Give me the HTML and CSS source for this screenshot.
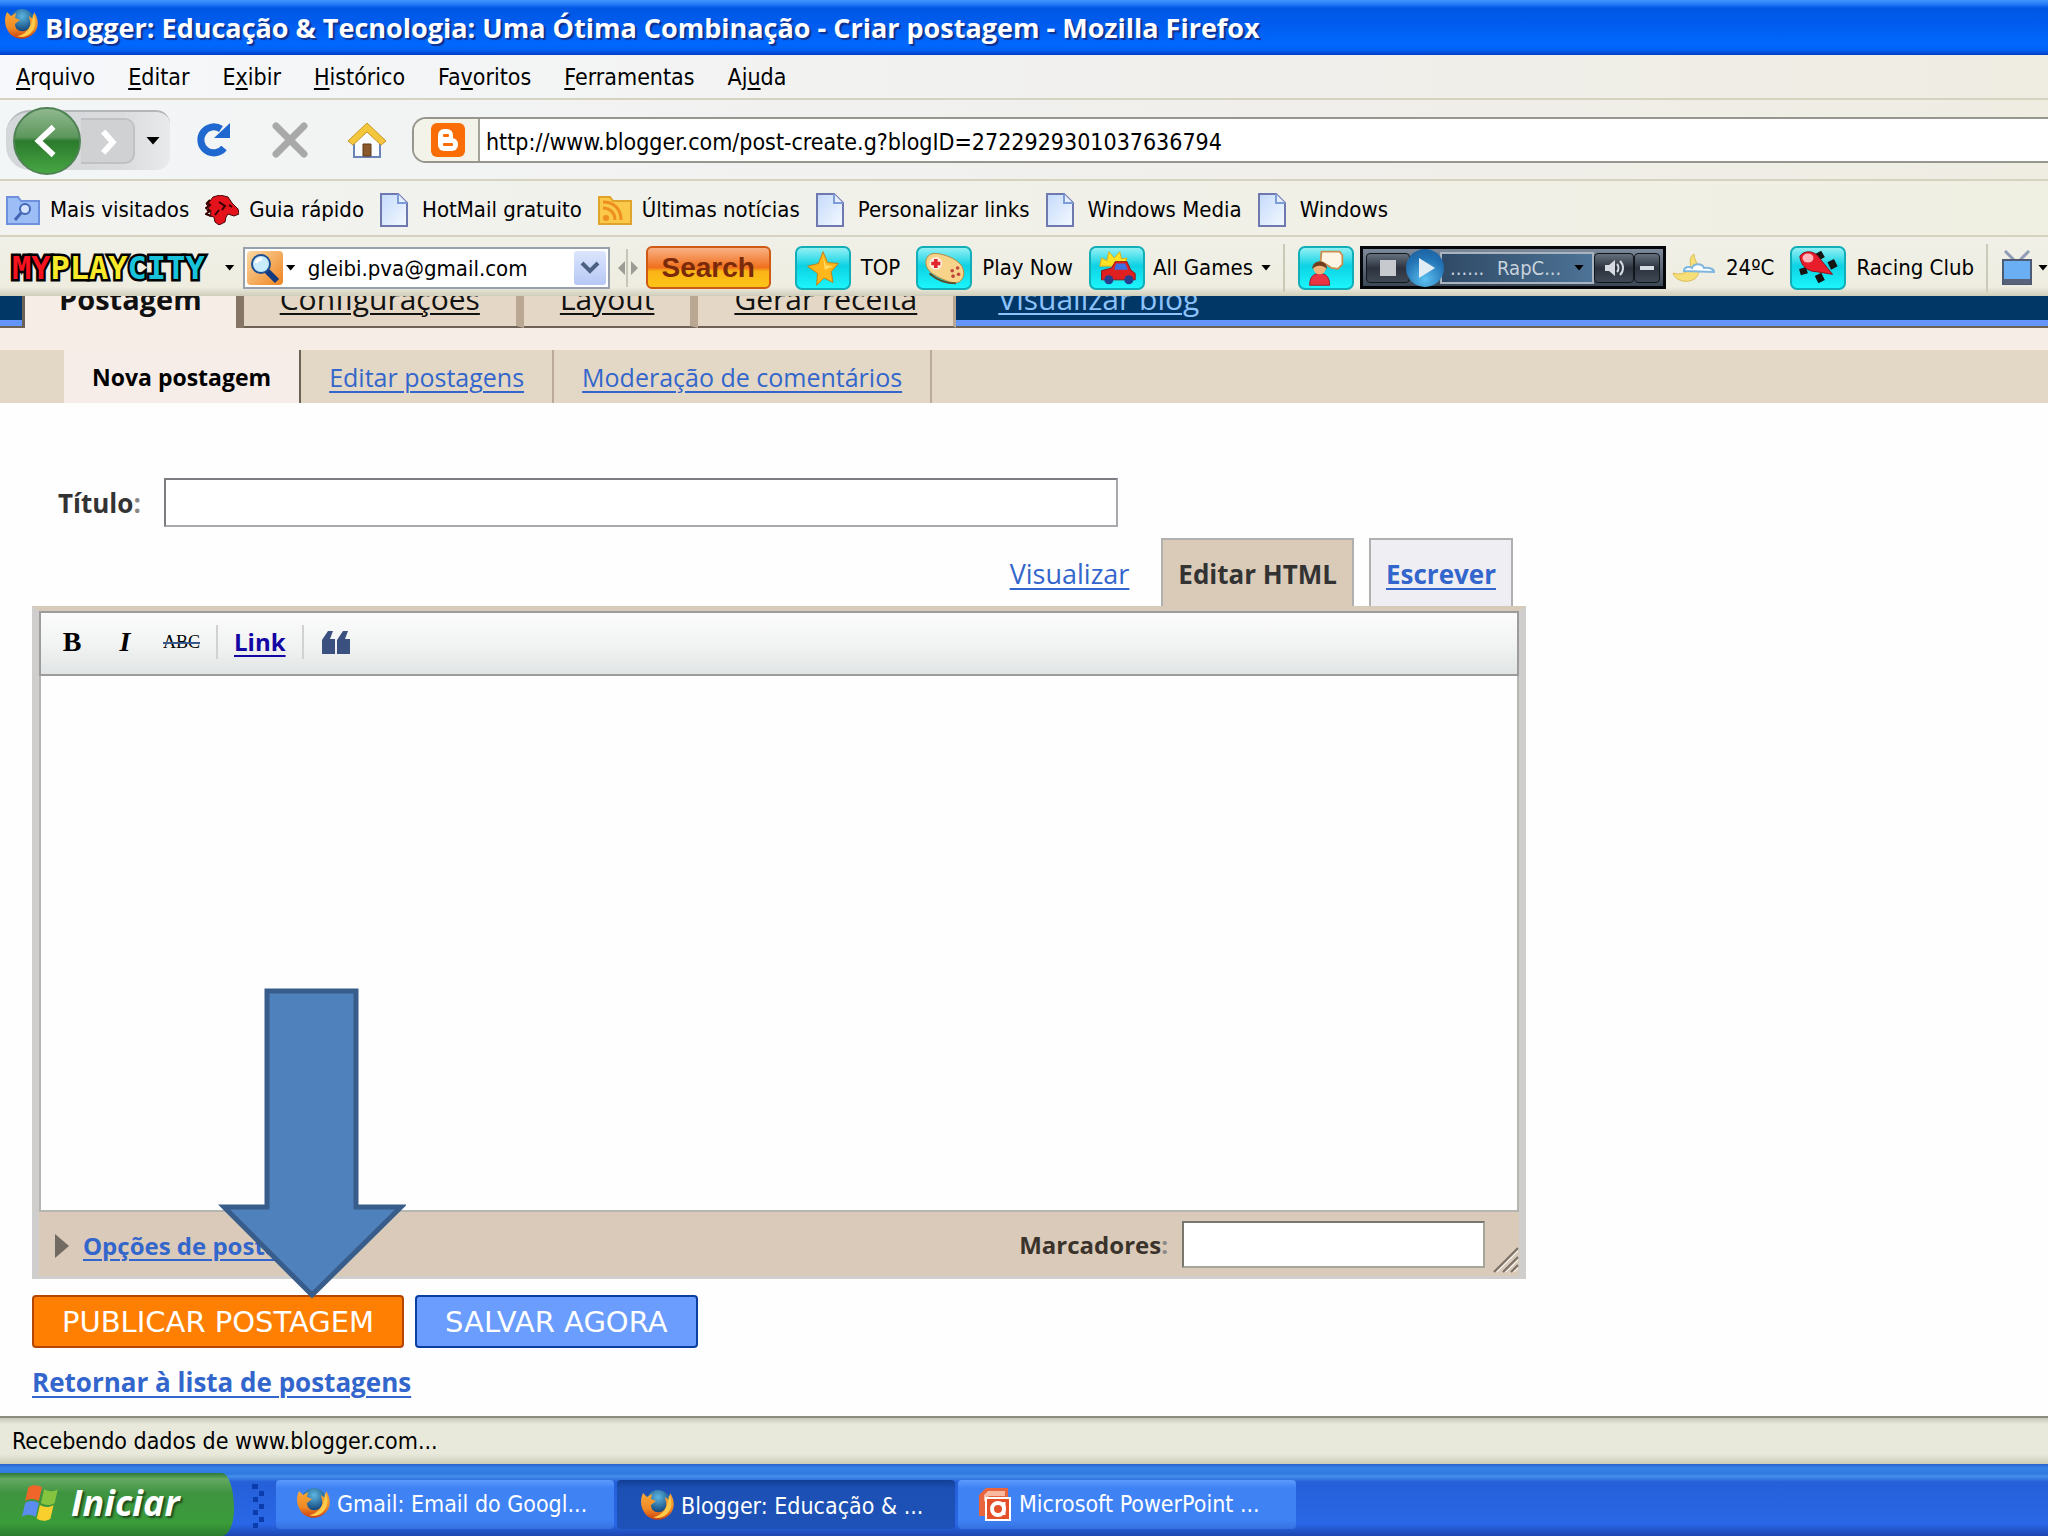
FILE: index.html
```
<!DOCTYPE html>
<html lang="pt-BR">
<head>
    <meta charset="UTF-8">
    <meta name="viewport" content="width=device-width, initial-scale=1.0">
    <title>Blogger: Educação &amp; Tecnologia: Uma Ótima Combinação - Criar postagem</title>
    <link rel="stylesheet" href="styles.css">
</head>
<body>
    <!-- Shared icons -->
    <svg class="defs" aria-hidden="true">
        <defs>
            <linearGradient id="pageFill" x1="0" y1="0" x2="1" y2="1">
                <stop offset="0" stop-color="#c4dafb"/>
                <stop offset="1" stop-color="#f4f9ff"/>
            </linearGradient>
            <radialGradient id="globe" cx="0.5" cy="0.3" r="0.7">
                <stop offset="0" stop-color="#5cb6e0"/>
                <stop offset="1" stop-color="#0b3a70"/>
            </radialGradient>
            <linearGradient id="fox" x1="0" y1="0" x2="0" y2="1">
                <stop offset="0" stop-color="#f9a83a"/>
                <stop offset="0.6" stop-color="#f08a24"/>
                <stop offset="1" stop-color="#c93c10"/>
            </linearGradient>
        </defs>
        <symbol id="firefox" viewBox="0 0 34 34">
            <circle cx="18" cy="13" r="12" fill="url(#globe)"/>
            <path d="M3 4l4 4 5-3-1 5 5 2-5 4c0 5 4 8 9 7 5-1 7-5 6-10l-1-5 4 3 1-7c5 7 5 16 0 21-6 7-17 8-24 1C0 18 0 11 3 4z" fill="url(#fox)"/>
            <path d="M29 6c4 7 3 14-2 19-4 4-10 5-14 3 8-1 15-7 16-22z" fill="#ffc94a"/>
        </symbol>
        <symbol id="page" viewBox="0 0 28 34">
            <path d="M1 1h17l9 9v23H1z" fill="url(#pageFill)" stroke="#7078b0" stroke-width="2"/>
            <path d="M18 1v9h9" fill="#e4eefc" stroke="#7c9cd8" stroke-width="2"/>
        </symbol>
    </svg>

    <header class="titlebar">
        <svg class="title-icon"><use href="#firefox"/></svg>
        <h1>Blogger: Educação &amp; Tecnologia: Uma Ótima Combinação - Criar postagem - Mozilla Firefox</h1>
    </header>

    <nav class="menubar">
        <button><u>A</u>rquivo</button>
        <button><u>E</u>ditar</button>
        <button>E<u>x</u>ibir</button>
        <button><u>H</u>istórico</button>
        <button>Fa<u>v</u>oritos</button>
        <button><u>F</u>erramentas</button>
        <button>Aj<u>u</u>da</button>
    </nav>

    <div class="navbar">
        <div class="history">
            <button class="back" aria-label="Voltar">
                <svg viewBox="0 0 68 68"><path d="M41 19L25 34l16 15" fill="none" stroke="#fff" stroke-width="6"/></svg>
            </button>
            <button class="forward" aria-label="Avançar">
                <svg viewBox="0 0 54 46"><path d="M23 12l10 11-10 11" fill="none" stroke="#fff" stroke-width="6"/></svg>
            </button>
            <button class="caret" aria-label="Histórico recente"></button>
        </div>
        <button class="nav-icon" aria-label="Recarregar">
            <svg viewBox="0 0 36 36"><path d="M29 26A13 13 0 1 1 26 7" fill="none" stroke="#1e68cf" stroke-width="7"/><path d="M35 1v15H19z" fill="#1e68cf"/></svg>
        </button>
        <button class="nav-icon" aria-label="Parar">
            <svg viewBox="0 0 36 36"><path d="M4 4l28 28M32 4L4 32" stroke="#a9a9a9" stroke-width="7" stroke-linecap="round"/></svg>
        </button>
        <button class="nav-icon" aria-label="Página inicial">
            <svg viewBox="0 0 38 36"><path d="M6 18L19 6l13 12v17H6z" fill="#fafcff" stroke="#6a83b8" stroke-width="2"/><path d="M15 22h8v12h-8z" fill="#8a5a2c" stroke="#5c3a1c"/><path d="M19 1L0 19l5 4L19 10l14 13 5-4z" fill="#f3c63b" stroke="#c9962a"/></svg>
        </button>
        <div class="address">
            <span class="site">
                <svg viewBox="0 0 34 34"><rect width="34" height="34" rx="6" fill="#f96c06"/><rect x="7" y="6" width="15" height="21" rx="6" fill="#fff"/><rect x="7" y="15" width="20" height="13" rx="6" fill="#fff"/><rect x="12" y="11" width="6" height="3" rx="1" fill="#f96c06"/><rect x="12" y="20" width="10" height="3" rx="1" fill="#f96c06"/></svg>
            </span>
            <input type="text" aria-label="Endereço" value="http://www.blogger.com/post-create.g?blogID=2722929301037636794">
        </div>
    </div>

    <nav class="bookmarks">
        <a href="#"><svg class="mark" viewBox="0 0 34 30"><path d="M1 2h11l3 4h18v23H1z" fill="#9dbdf6" stroke="#6f90dc" stroke-width="2"/><circle cx="19" cy="14" r="5" fill="#d2e2ff" stroke="#4464b4" stroke-width="2"/><path d="M15 18l-6 7" stroke="#4464b4" stroke-width="3"/></svg>Mais visitados</a>
        <a href="#"><svg class="mark" viewBox="0 0 34 30"><path d="M5 6l3-4 7-2 8 2 4 6 6 6 1 5-5 2-6-2-2 3-1 5-6 3-4-3-1-5-4-1 1-4-4-1 2-4-3-3 3-2z" fill="#e3121b" stroke="#4a0508"/><path d="M5 5L2 8l3 2-4 3 4 3-4 3 5 2M14 7l6 4-3 4M24 10l3 2M10 20l4-5" stroke="#300" stroke-width="2" fill="none"/></svg>Guia rápido</a>
        <a href="#"><svg class="sheet"><use href="#page"/></svg>HotMail gratuito</a>
        <a href="#"><svg class="mark" viewBox="0 0 34 30"><path d="M1 2h11l3 4h18v23H1z" fill="#fbc94a" stroke="#e0a32c" stroke-width="2"/><path d="M5 13c7 0 12 5 12 12M5 7c11 0 18 7 18 18" fill="none" stroke="#ef8e21" stroke-width="3"/><circle cx="8" cy="23" r="3" fill="#ef8e21"/></svg>Últimas notícias</a>
        <a href="#"><svg class="sheet"><use href="#page"/></svg>Personalizar links</a>
        <a href="#"><svg class="sheet"><use href="#page"/></svg>Windows Media</a>
        <a href="#"><svg class="sheet"><use href="#page"/></svg>Windows</a>
    </nav>

    <div class="toolbar">
        <a href="#" class="logo"><span class="red">My</span><span class="yellow">Play</span><span class="cyan">City</span></a>
        <button class="caret" aria-label="Menu MyPlayCity"></button>
        <div class="search">
            <button class="lens" aria-label="Tipo de busca">
                <svg viewBox="0 0 36 34"><path d="M19 19l11 11" stroke="#123a80" stroke-width="6"/><circle cx="14" cy="13" r="9" fill="#c8ecfa" stroke="#1c4f94" stroke-width="2"/><path d="M9 12c1-3 3-4 6-4" stroke="#fff" stroke-width="3" fill="none"/></svg>
            </button>
            <span class="caret"></span>
            <input type="text" aria-label="Buscar" value="gleibi.pva@gmail.com">
            <button class="drop" aria-label="Abrir lista">
                <svg viewBox="0 0 20 14"><path d="M2 2l8 8 8-8" fill="none" stroke="#4d6185" stroke-width="4"/></svg>
            </button>
        </div>
        <svg class="splitter" viewBox="0 0 20 40"><path d="M9 1v38" stroke="#c8c6b8" stroke-width="2"/><path d="M7 13v14l-7-7zM13 13v14l7-7z" fill="#9c9c94"/></svg>
        <button class="search-btn">Search</button>
        <a href="#" class="tool">
            <svg class="tile" viewBox="0 0 56 44"><path d="M28 4l5 12 12 1-8 9 2 12-10-5-8 8 1-13-11-8 12-3z" fill="#fdb61b" stroke="#c07c10"/><path d="M28 9l3 10 8 1-9 4z" fill="#ffdf6a"/></svg>TOP
        </a>
        <a href="#" class="tool">
            <svg class="tile" viewBox="0 0 56 44"><path d="M8 16c0-6 4-10 10-10 8 0 23 5 29 13 4 6 4 14-2 18-5 3-12 0-19-3C17 30 8 25 8 16z" fill="#f8d48a" stroke="#b98235"/><path d="M12 28c7 6 18 11 29 11" fill="none" stroke="#5a4a28" stroke-width="2"/><circle cx="19" cy="17" r="7" fill="#fbeedd"/><path d="M19 12v10M14 17h10" stroke="#e2262d" stroke-width="4"/><circle cx="37" cy="25" r="2" fill="#c2473c"/><circle cx="43" cy="22" r="2" fill="#c2473c"/><circle cx="38" cy="31" r="2" fill="#c2473c"/><circle cx="44" cy="29" r="2" fill="#c2473c"/></svg>Play Now
        </a>
        <a href="#" class="tool games">
            <svg class="tile" viewBox="0 0 56 44"><path d="M9 20l2-9 6 3 2-10 6 7 6-7 2 8 6-1-3 9z" fill="#ffe324" stroke="#e0a81a"/><path d="M11 25l11-3 4-7h13l4 9 5 4v7H11z" fill="#e02020" stroke="#8d1010"/><path d="M27 17h10l3 7H25z" fill="#3d6fe0"/><circle cx="19" cy="35" r="5" fill="#26408f"/><circle cx="41" cy="35" r="5" fill="#26408f"/></svg>All Games<span class="caret"></span>
        </a>
        <span class="divider"></span>
        <a href="#" class="tile-link" aria-label="Chat">
            <svg class="tile" viewBox="0 0 56 44"><path d="M23 4h20l3 4v10l-5 5-7-1-6-4-6-3z" fill="#fff5e4" stroke="#c98d4e" stroke-width="2"/><path d="M10 41c0-9 4-13 11-13s11 4 11 13z" fill="#ea3443" stroke="#a01522"/><circle cx="21" cy="22" r="7" fill="#efb57c"/><path d="M13 23c-1-11 17-11 16 0-4-4-11-5-16 0z" fill="#72401f"/></svg>
        </a>
        <div class="player">
            <button class="player-btn stop" aria-label="Parar"><i></i></button>
            <button class="play" aria-label="Tocar"><svg viewBox="0 0 38 38"><path d="M13 9l16 10-16 10z" fill="#e2ecf5"/></svg></button>
            <span class="track"><span>......</span><span>RapC...</span><span class="caret"></span></span>
            <button class="player-btn" aria-label="Volume"><svg viewBox="0 0 20 20"><path d="M1 7h4l6-5v16l-6-5H1z" fill="#d6dbe2"/><path d="M13 6c2 2 2 6 0 8M16 3c4 4 4 10 0 14" stroke="#d6dbe2" stroke-width="2" fill="none"/></svg></button>
            <button class="player-btn" aria-label="Minimizar"><svg viewBox="0 0 20 20"><path d="M3 10h14" stroke="#d6dbe2" stroke-width="4"/></svg></button>
        </div>
        <a href="#" class="tool weather">
            <svg viewBox="0 0 44 30"><path d="M22 1c-5 3-4 9-3 13-4 7-12 8-18 6 2 7 10 9 16 8 8-1 11-8 10-14-2-5-5-7-5-13z" fill="#f6df78" stroke="#dcbc55"/><path d="M12 18c0-4 5-5 8-3 2-5 10-5 12 0 5-1 10 1 10 4z" fill="#fff" stroke="#7db7e0" stroke-width="2"/></svg>24ºC
        </a>
        <a href="#" class="tool">
            <svg class="tile" viewBox="0 0 56 44"><path d="M28 5l4 7M11 22l2 7M42 14l4 8M28 29l4 8" stroke="#151515" stroke-width="8"/><path d="M8 9c5-7 15-6 20 0l16 20-18-3C17 26 9 20 8 9z" fill="#e81d2c" stroke="#8b0b15"/><ellipse cx="17" cy="11" rx="6" ry="5" fill="#ffb7bd"/></svg>Racing Club
        </a>
        <span class="divider"></span>
        <button class="tv" aria-label="TV">
            <svg viewBox="0 0 30 36"><path d="M3 1l9 9M27 1l-9 9" stroke="#8f9db5" stroke-width="3"/><rect x="1" y="10" width="28" height="24" fill="#6aaef4" stroke="#4c5a74" stroke-width="2"/><path d="M2 29h26v5H2z" fill="#59647a"/></svg>
            <span class="caret"></span>
        </button>
    </div>

    <main>
        <nav class="tabs">
            <div class="tab current">Postagem</div>
            <a href="#" class="tab">Configurações</a>
            <a href="#" class="tab">Layout</a>
            <a href="#" class="tab">Gerar receita</a>
            <a href="#" class="view-blog">Visualizar blog</a>
        </nav>

        <nav class="subtabs">
            <span class="subtab current">Nova postagem</span>
            <a href="#" class="subtab">Editar postagens</a>
            <a href="#" class="subtab">Moderação de comentários</a>
        </nav>

        <form class="post">
            <div class="title-row">
                <label for="title">Título<span class="colon">:</span></label>
                <input type="text" id="title">
            </div>

            <div class="modes">
                <a href="#" class="mode plain">Visualizar</a>
                <span class="mode html">Editar HTML</span>
                <a href="#" class="mode compose">Escrever</a>
            </div>

            <div class="editor">
                <div class="format">
                    <button type="button" class="bold">B</button>
                    <button type="button" class="italic">I</button>
                    <button type="button" class="strike">ABC</button>
                    <span class="format-sep"></span>
                    <a href="#" class="link">Link</a>
                    <span class="format-sep"></span>
                    <button type="button" aria-label="Citação">
                        <svg class="quote" viewBox="0 0 28 24"><path d="M0 24V10L6 1h5L8 9h5v15zM15 24V10l6-9h5l-3 8h5v15z" fill="#3a507e"/></svg>
                    </button>
                </div>
                <textarea aria-label="Texto da postagem"></textarea>
                <div class="editor-foot">
                    <a href="#" class="options">Opções de postagem</a>
                    <label for="labels">Marcadores<span class="colon">:</span></label>
                    <input type="text" id="labels">
                    <svg class="grip" viewBox="0 0 26 26"><path d="M1 25L25 1M10 25l15-15M18 25l7-7" stroke="#7a7068" stroke-width="2"/><path d="M4 25L25 4M13 25l12-12M21 25l4-4" stroke="#fff" stroke-width="1"/></svg>
                </div>
                <!-- Points at the publish button -->
                <svg class="pointer" viewBox="0 0 188 312"><path d="M49 3h89v216h45L94 307 6 219h43z" fill="#4f81bd" stroke="#385d8a" stroke-width="5"/></svg>
            </div>

            <div class="actions">
                <button type="button" class="publish">PUBLICAR POSTAGEM</button>
                <button type="button" class="save">SALVAR AGORA</button>
            </div>
            <a href="#" class="return">Retornar à lista de postagens</a>
        </form>
    </main>

    <div class="status">Recebendo dados de www.blogger.com...</div>

    <footer class="taskbar">
        <button class="start">
            <svg viewBox="0 0 38 36"><path d="M6 3c5-3 9-2 13 0l-3 13c-4-2-8-3-13 0z" fill="#f0652a"/><path d="M21 5c4 2 8 3 13 0l-3 13c-5 3-9 2-13 0z" fill="#86c440"/><path d="M3 18c5-3 9-2 13 0l-3 13c-4-2-8-3-13 0z" fill="#5b8df0"/><path d="M17 20c4 2 8 3 13 0l-3 13c-5 3-9 2-13 0z" fill="#f8cf2c"/></svg>
            Iniciar
        </button>
        <span class="dots"></span>
        <button class="task"><svg><use href="#firefox"/></svg>Gmail: Email do Googl...</button>
        <button class="task active"><svg><use href="#firefox"/></svg>Blogger: Educação &amp; ...</button>
        <button class="task">
            <svg viewBox="0 0 34 34"><path d="M8 1h22v28H1V8z" fill="#e8643c"/><path d="M10 4h17v5H11l-5 6v-7z" fill="#f7b9a0"/><rect x="8" y="11" width="24" height="22" fill="#e4502a" stroke="#fff" stroke-width="2"/><circle cx="20" cy="22" r="6" fill="none" stroke="#fff" stroke-width="4"/><path d="M26 15v13" stroke="#fff" stroke-width="3"/></svg>Microsoft PowerPoint ...
        </button>
    </footer>
</body>
</html>
```
FILE: styles.css
```
* {
    box-sizing: border-box;
}

body {
    margin: 0;
    min-height: 100vh;
    display: flex;
    flex-direction: column;
    font-family: 'DejaVu Sans Condensed', 'DejaVu Sans', sans-serif;
    font-size: 23px;
    line-height: 28px;
    color: #000;
    background-color: #fefefe;
    overflow-x: hidden;
}

button,
input,
textarea {
    font: inherit;
    color: inherit;
    margin: 0;
    padding: 0;
    border: none;
    background: none;
    border-radius: 0;
    outline: none;
}

svg {
    display: block;
    flex: none;
}

a {
    color: #3366cc;
    text-underline-offset: 4px;
    text-decoration-thickness: 2px;
}

.defs {
    position: absolute;
    width: 0;
    height: 0;
}

.caret {
    flex: none;
    width: 10px;
    height: 6px;
    background-color: #000;
    clip-path: polygon(0 0, 100% 0, 50% 100%);
}

/* Browser window */
.titlebar {
    display: flex;
    align-items: center;
    height: 55px;
    padding: 0 4px;
    background: linear-gradient(#3f97ff 0, #2a7df8 4px, #0058e4 8px, #005cee 24px, #0068ff 44px, #0062f4 50px, #003cc4 55px);
}

.title-icon {
    width: 34px;
    height: 34px;
    margin-bottom: 6px;
}

.titlebar h1 {
    margin: 0 7px;
    font-family: 'Open Sans', sans-serif;
    font-size: 27px;
    line-height: 36px;
    color: #fff;
    text-shadow: 2px 2px 1px #10308c;
    white-space: nowrap;
}

.menubar {
    display: flex;
    gap: 33px;
    align-items: center;
    height: 45px;
    padding: 0 16px;
    background: linear-gradient(90deg, #f6f8fb, #f0efec 60%, #efede2);
    border-bottom: 2px solid #d6d2c0;
}

.menubar u {
    text-underline-offset: 3px;
    text-decoration-thickness: 2px;
}

.navbar {
    display: flex;
    align-items: center;
    height: 81px;
    padding-left: 6px;
    background: linear-gradient(90deg, #f3f6f7, #f0efec 60%, #efede2);
    border-bottom: 2px solid #d6d2c0;
}

.history {
    display: flex;
    align-items: center;
    width: 164px;
    height: 60px;
    margin-right: 24px;
    padding-left: 7px;
    border-radius: 24px 14px 14px 24px;
    border-top: 2px solid #b4b6b8;
    background: linear-gradient(90deg, #d4d7da, #d9dbdd 70%, #e9eaeb);
}

.back {
    width: 68px;
    height: 68px;
    margin: -6px 0;
    border-radius: 50%;
    border: 2px solid #4f8254;
    background: linear-gradient(#90b890 0, #5d975c 44%, #2b7a2c 50%, #46a643 100%);
}

.forward {
    width: 54px;
    height: 46px;
    border: 2px solid #bfc1c3;
    border-left: none;
    border-radius: 0 10px 10px 0;
    background-color: #cfd1d3;
}

.forward svg {
    width: 100%;
}

.history .caret {
    width: 14px;
    height: 8px;
    margin-left: 11px;
}

.nav-icon {
    width: 38px;
    margin-right: 39px;
}

.nav-icon svg {
    width: 38px;
    height: 36px;
}

.address {
    flex: 1;
    display: flex;
    align-items: center;
    height: 46px;
    margin-left: -13px;
    border: 2px solid #96968e;
    border-right: none;
    border-radius: 14px 0 0 14px;
    background-color: #fff;
    overflow: hidden;
}

.site {
    display: flex;
    align-items: center;
    justify-content: center;
    width: 66px;
    height: 100%;
    padding-left: 4px;
    background-color: #f4f3ea;
    border-right: 2px solid #a4a49a;
}

.site svg {
    width: 34px;
    height: 34px;
}

.address input {
    flex: 1;
    padding: 4px 0 0 6px;
}

.bookmarks {
    display: flex;
    align-items: center;
    gap: 16px;
    height: 56px;
    padding: 4px 0 0 6px;
    font-size: 22px;
    background: linear-gradient(90deg, #f2f2f0, #efefe2);
    border-bottom: 2px solid #d6d2c0;
}

.bookmarks a,
.tool {
    display: flex;
    align-items: center;
    color: #000;
    text-decoration: none;
    white-space: nowrap;
}

.mark {
    width: 34px;
    height: 30px;
    margin-right: 10px;
}

.sheet {
    width: 28px;
    height: 34px;
    margin-right: 14px;
}

.toolbar {
    display: flex;
    align-items: center;
    height: 59px;
    padding: 2px 0 0 12px;
    font-size: 22px;
    background: linear-gradient(#f1f0e8, #eeede0 50px, #cfcdba);
    overflow: hidden;
}

.logo {
    width: 194px;
    font-family: 'DejaVu Sans Mono', monospace;
    font-size: 32px;
    font-weight: bold;
    line-height: 40px;
    text-decoration: none;
    text-transform: uppercase;
    -webkit-text-stroke: 5px #000;
    paint-order: stroke fill;
}

.red {
    color: #f5131f;
}

.yellow {
    color: #f8ea2a;
}

.cyan {
    color: #19c3dc;
}

.logo + .caret {
    margin: 0 8px 0 20px;
}

.search {
    display: flex;
    align-items: center;
    width: 370px;
    height: 42px;
    padding: 2px;
    background-color: #fff;
    border: 2px solid #98a0ac;
}

.lens {
    width: 36px;
    height: 34px;
    margin-right: 3px;
    border-radius: 4px;
    background: linear-gradient(135deg, #fcd9a4, #ee8420);
}

.search input {
    flex: 1;
    min-width: 0;
    padding: 3px 0 0 12px;
}

.drop {
    width: 32px;
    height: 34px;
    border-radius: 3px;
    background: linear-gradient(#dbe5fd, #b6c8f4);
}

.drop svg {
    width: 20px;
    height: 14px;
    margin: 0 auto;
}

.splitter {
    width: 20px;
    height: 40px;
    margin: 0 8px;
}

.search-btn {
    width: 126px;
    height: 43px;
    margin-right: 24px;
    font-family: 'Liberation Sans', sans-serif;
    font-size: 28px;
    font-weight: bold;
    color: #7a2a0a;
    border: 2px solid #cf5a14;
    border-radius: 6px;
    background: linear-gradient(#f9b184, #f0701e 50%, #fbb416 60%, #fdc417);
}

.tool {
    gap: 10px;
    margin-right: 16px;
}

.games {
    gap: 8px;
}

.tile {
    width: 56px;
    height: 44px;
    border: 2px solid #12aeb8;
    border-radius: 7px;
    background: linear-gradient(#93f0f4, #0cd2e4 45%, #1cf5fb);
}

.divider {
    flex: none;
    width: 2px;
    height: 48px;
    margin-left: -4px;
    background-color: #cbc9b8;
}

.tile-link {
    margin: 0 6px 0 13px;
}

.player {
    display: flex;
    align-items: center;
    flex: none;
    width: 306px;
    height: 43px;
    margin-right: 6px;
    padding: 3px;
    border: 3px solid #05070a;
    background: linear-gradient(#7e8a99, #3c4856);
    color: #c8d2dc;
}

.player-btn {
    width: 40px;
    height: 30px;
    border: 1px solid #11161d;
    border-radius: 4px;
    background: linear-gradient(#66707e, #2c333e 50%, #3f4855);
}

.player-btn svg {
    width: 20px;
    height: 20px;
    margin: 0 auto;
}

.player-btn:last-child {
    width: 26px;
}

.stop {
    width: 44px;
}

.stop i {
    display: block;
    width: 16px;
    height: 16px;
    margin: 0 auto;
    background-color: #c6c9ce;
}

.play {
    width: 38px;
    height: 38px;
    margin: 0 -4px;
    border-radius: 50%;
    z-index: 1;
    background: radial-gradient(circle at 50% 80%, #5cc0f0, #2272b4 60%, #1b5c98);
}

.track {
    flex: 1;
    display: flex;
    align-items: center;
    justify-content: space-between;
    height: 32px;
    padding: 0 8px;
    font-size: 20px;
    border: 2px solid #a8b4c0;
    background: linear-gradient(90deg, #2f4a66, #4d7396);
}

.weather svg {
    width: 44px;
    height: 30px;
}

.tv {
    display: flex;
    align-items: center;
    gap: 6px;
    margin-left: 14px;
}

.tv svg {
    width: 30px;
    height: 36px;
}

/* Blogger page */
main {
    flex: 1;
    font-family: 'Open Sans', sans-serif;
    font-size: 25px;
    line-height: 32px;
}

.tabs {
    display: flex;
    align-items: flex-end;
    height: 32px;
    padding-left: 22px;
    overflow: hidden;
    background: linear-gradient(#003767 24px, #6496fa 24px, #6496fa 30px, #6d6054 30px);
}

.tab,
.view-blog {
    flex: none;
    height: 60px;
    padding: 15px 36px 0;
    font-size: 30px;
    text-underline-offset: 3px;
}

.tab {
    border-right: 8px solid #b9a793;
    border-bottom: 2px solid #6d6054;
    background-color: #e4d7c5;
    color: #111;
}

.tab.current {
    padding: 15px 34px 0;
    font-size: 29px;
    font-weight: bold;
    border-left: 3px solid #6d6054;
    border-right-color: #857565;
    border-bottom: none;
    background-color: #f6ede7;
}

.tab:nth-child(4) {
    border-right-width: 3px;
}

.view-blog {
    padding-left: 42px;
    color: #8ec2fb;
}

.subtabs {
    display: flex;
    height: 75px;
    padding: 0 64px;
    border-top: 22px solid #f6ede6;
    background-color: #e3d8c5;
}

.subtab {
    padding: 11px 28px;
    border-right: 2px solid #b9ab98;
}

.subtab.current {
    font-size: 23px;
    font-weight: bold;
    border-right-color: #6d6054;
    background-color: #f6ede8;
}

.post {
    width: 1526px;
    max-width: 100%;
    padding: 75px 0 0 32px;
}

.title-row {
    display: flex;
    align-items: center;
    padding-left: 26px;
}

.title-row label {
    width: 106px;
    font-size: 26px;
    font-weight: bold;
    color: #333;
}

.colon {
    color: #888;
}

.title-row input {
    width: 954px;
    height: 49px;
    border: 2px solid #a9a9ad;
    border-top-color: #7c7c82;
    border-left-color: #7c7c82;
    background-color: #fff;
}

.modes {
    display: flex;
    justify-content: flex-end;
    gap: 15px;
    padding: 11px 13px 0 0;
}

.mode {
    height: 68px;
    padding: 18px 15px 0;
    font-size: 26px;
    font-weight: bold;
    border: 2px solid #b0b0b0;
    border-bottom: none;
}

.plain {
    font-size: 27px;
    font-weight: normal;
    border-color: transparent;
}

.html {
    color: #333;
    background-color: #dacbb9;
}

.compose {
    background-color: #efeef2;
}

.editor {
    position: relative;
    border: 7px solid #cfcecd;
    border-top: 5px solid #d8cab8;
    border-bottom-width: 3px;
}

.format {
    display: flex;
    align-items: center;
    height: 65px;
    padding: 0 0 3px 20px;
    border: 2px solid #9c9c9c;
    background: linear-gradient(#fbfcfb, #f2f4f3 50%, #e2e5e5);
    font-family: 'Liberation Serif', serif;
}

.bold,
.italic {
    width: 22px;
    margin-right: 31px;
    font-size: 28px;
    font-weight: bold;
}

.italic {
    font-style: italic;
    margin-right: 27px;
}

.strike {
    font-size: 18px;
    text-decoration: line-through #3a5a8c 2px;
}

.format-sep {
    width: 2px;
    height: 34px;
    margin: 0 16px;
    background-color: #d2d2d2;
}

.link {
    font-family: 'Open Sans', sans-serif;
    font-size: 24px;
    font-weight: bold;
    color: #1406a4;
}

.quote {
    width: 28px;
    height: 24px;
    margin-left: 2px;
}

textarea {
    display: block;
    width: 100%;
    height: 536px;
    resize: none;
    border: 2px solid #b5b5b2;
    border-top: none;
    background-color: #fefefe;
}

.editor-foot {
    display: flex;
    align-items: center;
    height: 64px;
    padding-left: 16px;
    background-color: #dacab9;
    font-size: 24px;
    font-weight: bold;
}

.options {
    display: flex;
    align-items: center;
    gap: 14px;
    margin-right: auto;
    padding-top: 4px;
}

.options::before {
    content: '';
    width: 14px;
    height: 24px;
    background-color: #716a62;
    clip-path: polygon(0 0, 100% 50%, 0 100%);
}

.editor-foot label {
    margin-right: 14px;
    padding-top: 2px;
    color: #3a332c;
}

.editor-foot input {
    width: 303px;
    height: 47px;
    border: 2px solid #a5a59a;
    border-top-color: #77776e;
    border-left-color: #77776e;
    background-color: #fff;
}

.grip {
    width: 26px;
    height: 26px;
    margin: 32px 0 0 8px;
}

.pointer {
    position: absolute;
    left: 179px;
    bottom: -24px;
    width: 188px;
    height: 312px;
}

.actions {
    display: flex;
    gap: 11px;
    padding-top: 16px;
}

.actions button {
    height: 53px;
    padding: 0 28px;
    font-family: 'DejaVu Sans', sans-serif;
    font-size: 29px;
    color: #fff;
    border: 2px solid #b34700;
    border-radius: 4px;
    background-color: #ff7f02;
}

.actions .save {
    border-color: #0a3fa0;
    background-color: #6a9dfd;
}

.return {
    display: inline-block;
    padding: 18px 0;
    font-size: 26px;
    font-weight: bold;
}

.status {
    height: 48px;
    padding: 9px 12px;
    border-top: 2px solid #8c8c80;
    background: linear-gradient(#c8c8ba, #e8e9da 6px, #e8e9da 36px, #cdceb8);
}

.taskbar {
    display: flex;
    align-items: center;
    height: 72px;
    color: #fff;
    background: linear-gradient(#2a62cc 0, #3584e6 4px, #2f78e0 10px, #4590ec 12px, #2560d8 18px, #2a67e6 60px, #1c46b0);
}

.start {
    display: flex;
    align-items: center;
    align-self: flex-end;
    gap: 9px;
    width: 234px;
    height: 63px;
    padding: 0 0 4px 22px;
    font-family: 'Open Sans', sans-serif;
    font-size: 36px;
    font-weight: bold;
    font-style: italic;
    color: #fff;
    text-shadow: 2px 2px 2px #1c4a1c;
    border-radius: 0 12px 12px 0 / 0 36px 27px 0;
    background: linear-gradient(#2c7a34, #64a862 6px, #3f9440 20px, #3a9c3a 50px, #2a7c2e);
}

.start svg {
    width: 40px;
    height: 38px;
}

/* Two staggered columns of grip dots */
.dots {
    width: 14px;
    height: 44px;
    margin: 12px 10px 0 18px;
    background:
        linear-gradient(#0b3cae, #0b3cae) 0 0 / 5px 5px,
        repeating-linear-gradient(#0b3cae 0 5px, transparent 5px 13px) 1px 0 / 5px 100% no-repeat,
        repeating-linear-gradient(transparent 0 7px, #0b3cae 7px 12px, transparent 12px 13px) 7px 0 / 5px 100% no-repeat;
    background-repeat: no-repeat;
}

.task {
    display: flex;
    align-items: center;
    gap: 7px;
    width: 338px;
    height: 49px;
    margin: 8px 3px 0 0;
    padding-left: 20px;
    color: #fff;
    white-space: nowrap;
    border-radius: 4px;
    background: linear-gradient(#5c9afc, #3f82f4 8px, #3f82f4 40px, #3470e0);
}

.task.active {
    padding: 3px 0 0 23px;
    background: linear-gradient(#123e94, #1c50b4 8px, #1e52b8);
}

.task svg {
    width: 34px;
    height: 34px;
}
```
